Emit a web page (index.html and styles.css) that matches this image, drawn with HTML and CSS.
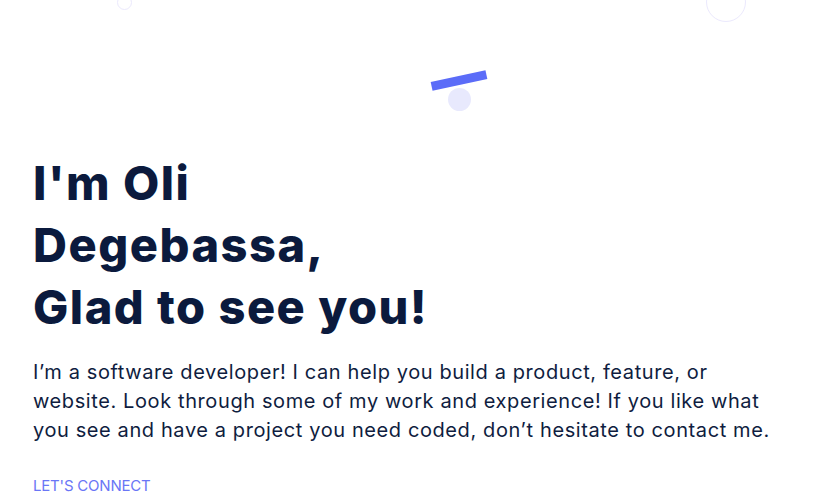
FILE: index.html
```html
<!DOCTYPE html>
<html lang="en">
<head>
<meta charset="utf-8">
<title>Oli Degebassa</title>
<link rel="stylesheet" href="styles.css">
</head>
<body>
<main class="hero">
  <span class="ring ring-small"></span>
  <span class="ring ring-big"></span>
  <span class="bar"></span>
  <span class="dot"></span>
  <h1 class="title">I'm Oli<br>Degebassa,<br>Glad to see you!</h1>
  <p class="intro">I’m a software developer! I can help you build a product, feature, or<br>website. Look through some of my work and experience! If you like what<br>you see and have a project you need coded, don’t hesitate to contact me.</p>
  <a class="connect" href="#">LET'S CONNECT</a>
</main>
</body>
</html>
```
FILE: styles.css
```css
* { box-sizing: border-box; }
html, body { margin: 0; padding: 0; background: #ffffff; }
body { font-family: Inter, "Noto Sans", sans-serif; color: #0b1a3d; overflow: hidden; }
.hero {
  position: relative;
  width: 815px;
  height: 504px;
  padding: 152px 0 0 33px;
}
.ring {
  position: absolute;
  border-radius: 50%;
  border: 1px solid #ebe9fd;
}
.ring-small { left: 117px; top: -5px; width: 15px; height: 15px; }
.ring-big { left: 706px; top: -18px; width: 40px; height: 40px; }
.bar {
  position: absolute;
  left: 431px;
  top: 76px;
  width: 56px;
  height: 9px;
  background: #5b6cf8;
  transform: rotate(-12deg);
}
.dot {
  position: absolute;
  left: 448px;
  top: 88px;
  width: 23px;
  height: 23px;
  border-radius: 50%;
  background: #e8e9fd;
}
.title {
  margin: 0;
  font-size: 47px;
  font-weight: 800;
  line-height: 62px;
  letter-spacing: 1.5px;
  color: #0b1a3d;
}
.intro {
  margin: 20px 0 0;
  font-size: 20px;
  line-height: 29px;
  letter-spacing: 0.6px;
  color: #0f1d40;
}
.connect {
  display: inline-block;
  margin-top: 31px;
  font-size: 15px;
  letter-spacing: -0.2px;
  color: #6a76f6;
  text-decoration: none;
}
```
